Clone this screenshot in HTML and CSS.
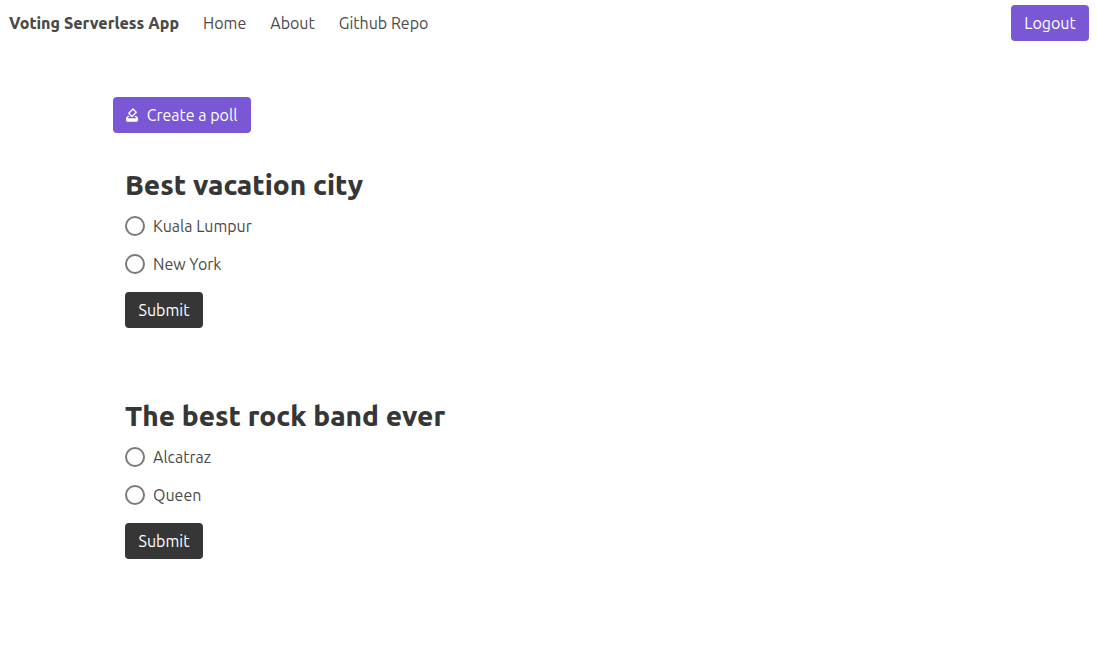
FILE: index.html
```html
<!DOCTYPE html>
<html lang="en">
<head>
<meta charset="utf-8">
<meta name="viewport" content="width=device-width, initial-scale=1">
<title>Voting Serverless App</title>
<link rel="stylesheet" href="styles.css">
</head>
<body>
<nav class="navbar">
  <a class="navbar-item brand" href="#">Voting Serverless App</a>
  <a class="navbar-item" href="#">Home</a>
  <a class="navbar-item" href="#">About</a>
  <a class="navbar-item" href="#">Github Repo</a>
  <button class="button primary logout" type="button">Logout</button>
</nav>
<main class="content">
  <button class="button primary create" type="button">
    <svg class="icon" viewBox="0 0 24 24" aria-hidden="true"><path d="M18 13H17.32L15.32 15H17.09L19 17H5L6.91 15H8.64L6.64 13H6L3 16V20A2 2 0 0 0 5 22H19A2 2 0 0 0 21 20V16L18 13M17 7.95L12.05 12.9L8.5 9.36L13.46 4.41L17 7.95M12.76 2.29L6.39 8.66C6 9.05 6 9.68 6.39 10.07L11.34 15C11.73 15.41 12.36 15.41 12.75 15L19.11 8.66C19.5 8.27 19.5 7.64 19.11 7.25L14.16 2.3C13.78 1.9 13.15 1.9 12.76 2.29Z"/></svg>
    <span>Create a poll</span>
  </button>
  <form class="poll">
    <h1 class="title">Best vacation city</h1>
    <div class="options">
      <label class="option"><input class="radio" type="radio" name="city"><span>Kuala Lumpur</span></label>
      <label class="option"><input class="radio" type="radio" name="city"><span>New York</span></label>
    </div>
    <button class="button dark" type="button">Submit</button>
  </form>
  <form class="poll">
    <h1 class="title">The best rock band ever</h1>
    <div class="options">
      <label class="option"><input class="radio" type="radio" name="band"><span>Alcatraz</span></label>
      <label class="option"><input class="radio" type="radio" name="band"><span>Queen</span></label>
    </div>
    <button class="button dark" type="button">Submit</button>
  </form>
</main>
</body>
</html>
```
FILE: styles.css
```css
* {
  box-sizing: border-box;
}

body {
  margin: 0;
  background: #fff;
  color: #4a4a4a;
  font-family: Ubuntu, "Noto Sans", sans-serif;
  font-size: 16px;
  line-height: 24px;
}

.navbar {
  display: flex;
  align-items: center;
  gap: 24px;
  padding: 5px 8px 5px 9px;
}

.navbar-item {
  color: inherit;
  text-decoration: none;
}

.brand {
  font-weight: 800;
}

.button {
  display: inline-flex;
  align-items: center;
  justify-content: center;
  gap: 7px;
  min-width: 78px;
  height: 36px;
  padding: 0 13px;
  border: 0;
  border-radius: 4px;
  color: #fff;
  font: inherit;
  cursor: pointer;
}

.primary {
  background: #7957d5;
}

.dark {
  background: #363636;
}

.logout {
  margin-left: auto;
}

.content {
  display: flex;
  flex-direction: column;
  align-items: flex-start;
  padding: 51px 113px;
}

.create {
  min-width: 138px;
  padding-left: 10px;
}

.icon {
  width: 16px;
  height: 16px;
  fill: currentColor;
}

.poll {
  display: flex;
  flex-direction: column;
  align-items: flex-start;
  gap: 16px;
  padding: 36px 12px;
}

.title {
  margin: 0;
  color: #363636;
  font-size: 28px;
  font-weight: 800;
  line-height: 32px;
}

.options {
  display: grid;
  gap: 14px;
  margin-top: -3px;
}

.option {
  display: flex;
  align-items: center;
  gap: 8px;
}

.radio {
  appearance: none;
  width: 20px;
  height: 20px;
  margin: 0;
  border: 2px solid #7a7a7a;
  border-radius: 50%;
}

.radio:checked {
  border-color: #7957d5;
  background: radial-gradient(#7957d5 45%, transparent 50%);
}
```
